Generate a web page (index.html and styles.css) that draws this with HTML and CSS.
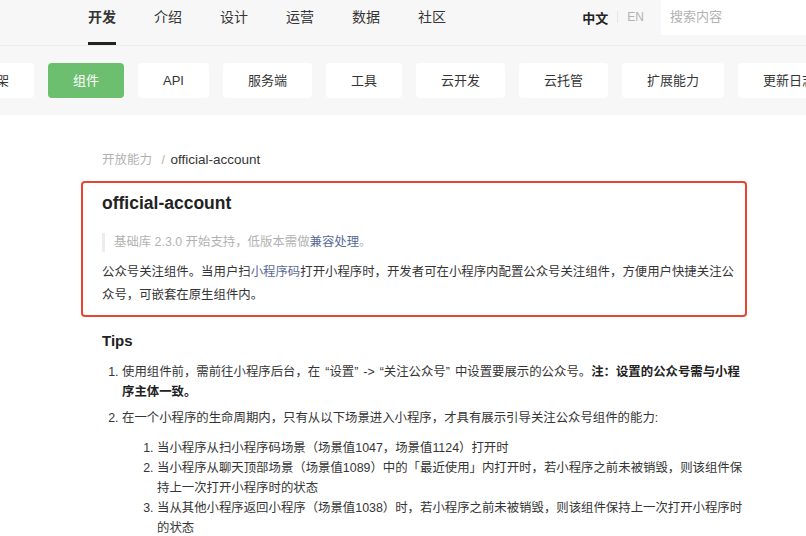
FILE: index.html
```html
<!DOCTYPE html>
<html lang="zh-CN">
<head>
    <meta charset="UTF-8" />
    <meta name="viewport" content="width=device-width, initial-scale=1.0"/>
    <title>official-account</title>
    <link rel="stylesheet" href="styles.css">
</head>
<body>
<header class="topbar">
    <nav class="main-nav">
        <a class="nav-item active" href="#">开发</a>
        <a class="nav-item" href="#">介绍</a>
        <a class="nav-item" href="#">设计</a>
        <a class="nav-item" href="#">运营</a>
        <a class="nav-item" href="#">数据</a>
        <a class="nav-item" href="#">社区</a>
    </nav>
    <div class="lang">
        <span class="lang-cur">中文</span>
        <span class="lang-sep"></span>
        <span class="lang-other">EN</span>
    </div>
    <div class="search">搜索内容</div>
</header>

<div class="tabs">
    <a class="tab" href="#">框架</a>
    <a class="tab active" href="#">组件</a>
    <a class="tab" href="#">API</a>
    <a class="tab" href="#">服务端</a>
    <a class="tab" href="#">工具</a>
    <a class="tab" href="#">云开发</a>
    <a class="tab" href="#">云托管</a>
    <a class="tab" href="#">扩展能力</a>
    <a class="tab" href="#">更新日志</a>
</div>

<main class="content">
    <div class="crumbs">
        <span class="crumb-parent">开放能力</span>
        <span class="crumb-sep">/</span>
        <span class="crumb-cur">official-account</span>
    </div>

    <section class="highlight">
        <h1>official-account</h1>
        <blockquote class="note">基础库 2.3.0 开始支持，低版本需做<a href="#">兼容处理</a>。</blockquote>
        <p class="desc">公众号关注组件。当用户扫<a href="#">小程序码</a>打开小程序时，开发者可在小程序内配置公众号关注组件，方便用户快捷关注公众号，可嵌套在原生组件内。</p>
    </section>

    <h2>Tips</h2>
    <ol class="tips">
        <li>使用组件前，需前往小程序后台，在<span class="quoted">“设置”</span>-&gt;<span class="quoted">“关注公众号”</span>中设置要展示的公众号。<strong>注：设置的公众号需与小程序主体一致。</strong></li>
        <li>在一个小程序的生命周期内，只有从以下场景进入小程序，才具有展示引导关注公众号组件的能力:
            <ol class="sub">
                <li>当小程序从扫小程序码场景（场景值1047，场景值1124）打开时</li>
                <li>当小程序从聊天顶部场景（场景值1089）中的「最近使用」内打开时，若小程序之前未被销毁，则该组件保持上一次打开小程序时的状态</li>
                <li>当从其他小程序返回小程序（场景值1038）时，若小程序之前未被销毁，则该组件保持上一次打开小程序时的状态</li>
            </ol>
        </li>
    </ol>
</main>
</body>
</html>
```

FILE: styles.css
```css
body {
  margin: 0;
  font-family: "Liberation Sans", "Noto Sans CJK SC", sans-serif;
  color: #353535;
  background: #fff;
  overflow: hidden;
}

a {
  text-decoration: none;
  color: inherit;
}

.topbar {
  display: flex;
  align-items: flex-start;
  height: 45px;
  background: #f7f7f7;
  border-bottom: 1px solid #ececec;
}

.main-nav {
  display: flex;
  gap: 38px;
  padding-left: 88px;
}

.nav-item {
  position: relative;
  font-size: 14px;
  line-height: 34px;
  height: 45px;
  color: #353535;
}

.nav-item.active {
  font-weight: bold;
}

.nav-item.active::after {
  content: "";
  position: absolute;
  left: 0;
  right: 0;
  bottom: 0;
  height: 3px;
  background: #222;
}

.lang {
  display: flex;
  align-items: center;
  margin-left: auto;
  height: 34px;
  font-size: 13px;
}

.lang-cur {
  font-weight: bold;
  color: #222;
}

.lang-sep {
  width: 1px;
  height: 12px;
  background: #e6e6e6;
  margin: 0 9px;
}

.lang-other {
  color: #b2b2b2;
  font-size: 12px;
}

.search {
  width: 136px;
  height: 35px;
  margin-left: 17px;
  padding-left: 9px;
  background: #fff;
  color: #b2b2b2;
  font-size: 13px;
  line-height: 34px;
}

.tabs {
  display: flex;
  gap: 14px;
  margin-left: -42px;
  padding: 17px 0;
  background: #f7f7f7;
  white-space: nowrap;
}

.tab {
  flex: none;
  height: 35px;
  line-height: 35px;
  padding: 0 25px;
  background: #fff;
  border-radius: 4px;
  font-size: 13px;
  color: #353535;
}

.tab.active {
  background: #6cbf6e;
  color: #fff;
}

.content {
  width: 645px;
  padding: 36px 0 0 102px;
  font-size: 12.4px;
}

.crumbs {
  font-size: 12.5px;
  line-height: 18px;
  margin-bottom: 12px;
}

.crumb-parent {
  color: #b2b2b2;
}

.crumb-sep {
  color: #b2b2b2;
  margin: 0 2px 0 6px;
}

.crumb-cur {
  color: #353535;
  font-size: 13.5px;
}

.highlight {
  margin: 0 0 0 -21px;
  padding: 7px 5px 8px 19px;
  border: 2px solid #e8442f;
  border-radius: 4px;
}

.highlight h1 {
  margin: 0;
  font-size: 17.5px;
  line-height: 26px;
  font-weight: 600;
  color: #222;
}

.note {
  margin: 17px 0 9px;
  padding-left: 9px;
  border-left: 3px solid #ececec;
  color: #b2b2b2;
  line-height: 19px;
}

.note a,
.desc a {
  color: #576b95;
}

.desc {
  margin: 0;
  line-height: 23px;
  color: #353535;
}

h2 {
  margin: 12px 0 0;
  font-size: 15px;
  font-weight: 600;
  line-height: 24px;
  color: #222;
}

.tips {
  margin: 10px 0 0;
  padding-left: 20px;
  line-height: 19.5px;
}

.tips > li {
  margin-bottom: 7px;
}

.tips strong {
  color: #222;
}

.quoted {
  padding: 0 5px;
}

.sub {
  margin: 9px 0 0;
  padding-left: 35px;
  line-height: 20px;
}
```
